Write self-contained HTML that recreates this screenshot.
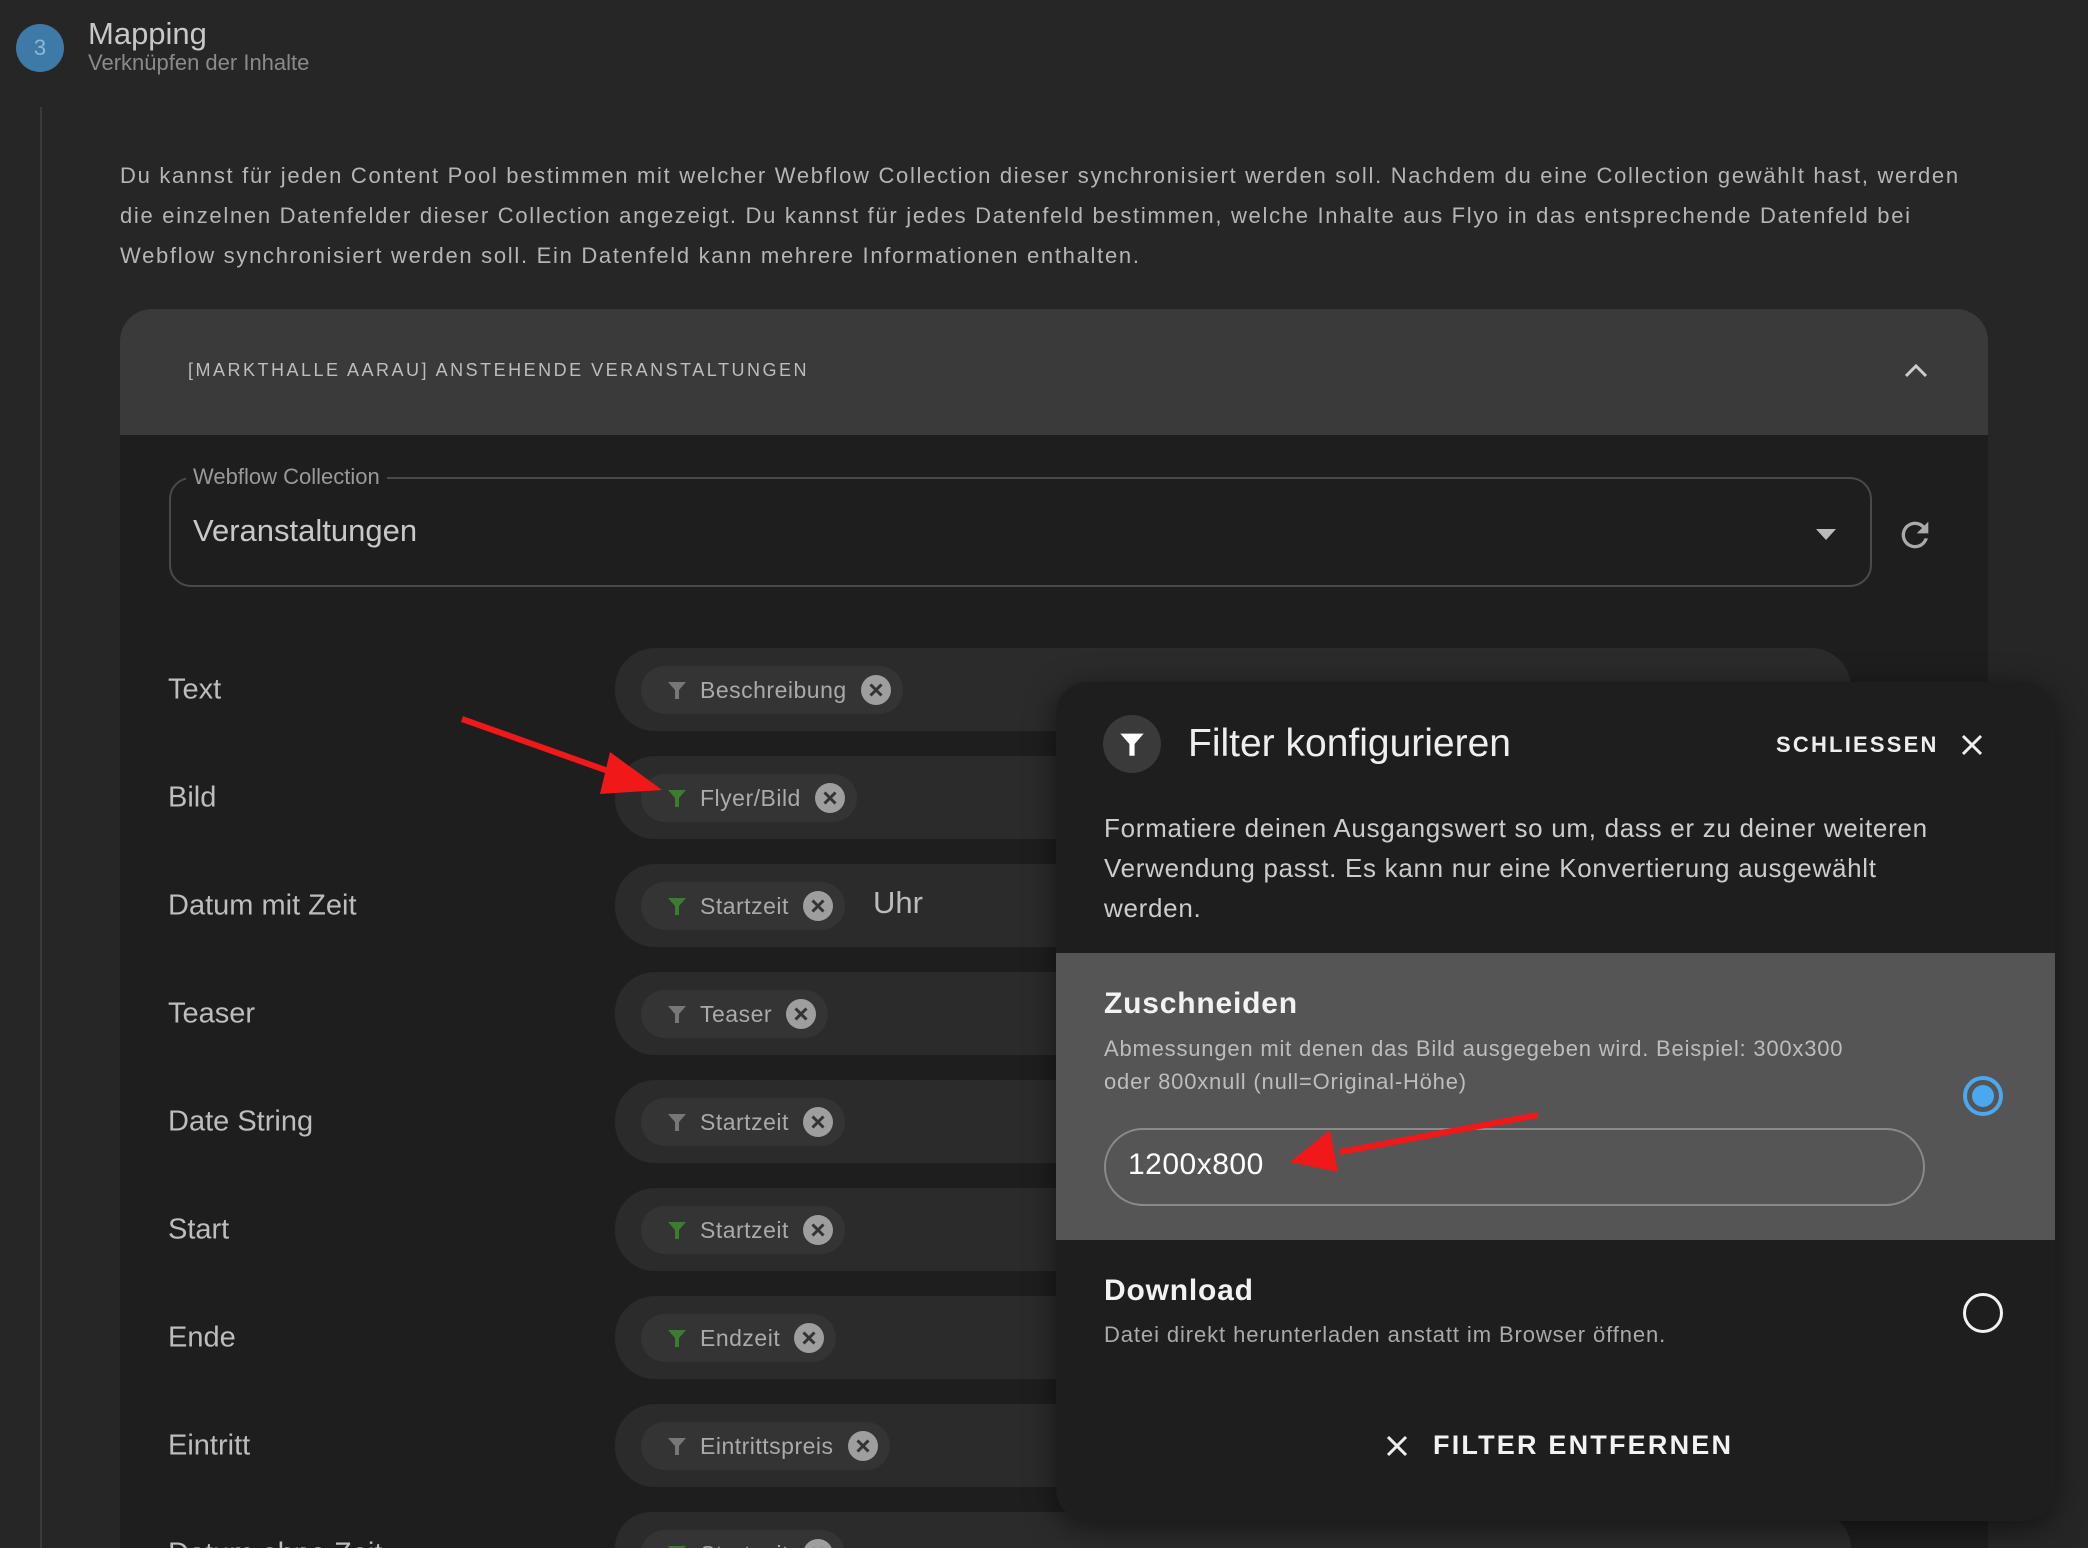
<!DOCTYPE html>
<html style="width:2088px;height:1548px;overflow:hidden"><head><meta charset="utf-8"><style>
*{box-sizing:border-box;margin:0;padding:0}
body{width:2088px;height:1548px;overflow:hidden;background:#262626;font-family:"Liberation Sans",sans-serif;position:relative;color:#ccc}
.abs{position:absolute}
.row{position:absolute;left:615px;width:1236px;height:83px;border-radius:40px;background:#2b2b2b}
.lbl{position:absolute;left:168px;font-size:29px;color:#bdbdbd;transform:translateY(-50%)}
.chip{position:absolute;left:26px;top:18px;height:48px;border-radius:24px;background:#343434;display:flex;align-items:center;padding:0 12px 0 26px;font-size:23px;color:#aaa;white-space:nowrap;letter-spacing:0.5px}
.chip svg.f{width:20px;height:20px;margin-right:13px}
.chip svg.x{width:30px;height:30px;margin-left:14px}
</style></head><body>
<svg width="0" height="0" style="position:absolute"><defs>
<symbol id="fun" viewBox="0 0 20 20"><path d="M1 2h18l-7 8v9h-4v-9z"/></symbol>
<symbol id="xc" viewBox="0 0 30 30"><circle cx="15" cy="15" r="15" fill="#9e9e9e"/><path d="M9.5 9.5l11 11M20.5 9.5l-11 11" stroke="#333" stroke-width="3"/></symbol>
</defs></svg>

<div class="abs" style="left:40px;top:107px;width:2px;height:1441px;background:#3a3a3a"></div>
<div class="abs" style="left:16px;top:24px;width:48px;height:48px;border-radius:50%;background:#3d7aa8;color:#8fb8d6;font-size:22px;text-align:center;line-height:48px">3</div>
<div class="abs" style="left:88px;top:16px;font-size:31px;color:#c8c8c8">Mapping</div>
<div class="abs" style="left:88px;top:50px;font-size:22px;color:#8a8a8a">Verknüpfen der Inhalte</div>

<div class="abs" style="left:120px;top:156px;width:1862px;font-size:22px;line-height:40px;color:#b5b5b5;letter-spacing:1.7px">Du kannst für jeden Content Pool bestimmen mit welcher Webflow Collection dieser synchronisiert werden soll. Nachdem du eine Collection gewählt hast, werden die einzelnen Datenfelder dieser Collection angezeigt. Du kannst für jedes Datenfeld bestimmen, welche Inhalte aus Flyo in das entsprechende Datenfeld bei Webflow synchronisiert werden soll. Ein Datenfeld kann mehrere Informationen enthalten.</div>

<div class="abs" style="left:120px;top:309px;width:1868px;height:1239px;background:#1e1e1e;border-radius:32px 32px 0 0;overflow:hidden">
 <div style="height:126px;background:#3a3a3a;position:relative">
  <div class="abs" style="left:68px;top:51px;font-size:18px;letter-spacing:2.5px;color:#bdbdbd">[MARKTHALLE AARAU] ANSTEHENDE VERANSTALTUNGEN</div>
  <svg class="abs" style="left:1783px;top:52px" width="26" height="18" viewBox="0 0 26 18"><path d="M3 15l10-10 10 10" fill="none" stroke="#ccc" stroke-width="3"/></svg>
 </div>
</div>

<div class="abs" style="left:169px;top:477px;width:1703px;height:110px;border:2px solid #4a4a4a;border-radius:22px"></div>
<div class="abs" style="left:186px;top:464px;padding:0 7px;background:#1e1e1e;font-size:22px;color:#999">Webflow Collection</div>
<div class="abs" style="left:193px;top:513px;font-size:31px;color:#c8c8c8">Veranstaltungen</div>
<svg class="abs" style="left:1816px;top:529px" width="20" height="12"><path d="M0 0h20L10 11z" fill="#bbb"/></svg>
<svg class="abs" style="left:1895px;top:515px" width="40" height="40" viewBox="0 0 24 24"><path d="M17.65 6.35A7.96 7.96 0 0 0 12 4a8 8 0 1 0 7.74 10h-2.08A6 6 0 1 1 12 6c1.66 0 3.14.69 4.22 1.78L13 11h7V4z" fill="#aaa"/></svg>

<div class="lbl" style="top:690px">Text</div>
<div class="lbl" style="top:798px">Bild</div>
<div class="lbl" style="top:906px">Datum mit Zeit</div>
<div class="lbl" style="top:1014px">Teaser</div>
<div class="lbl" style="top:1122px">Date String</div>
<div class="lbl" style="top:1230px">Start</div>
<div class="lbl" style="top:1338px">Ende</div>
<div class="lbl" style="top:1446px">Eintritt</div>
<div class="lbl" style="top:1554px">Datum ohne Zeit</div>

<div class="row" style="top:648px"><div class="chip"><svg class="f" fill="#777"><use href="#fun"/></svg>Beschreibung<svg class="x"><use href="#xc"/></svg></div></div>
<div class="row" style="top:756px"><div class="chip"><svg class="f" fill="#3f7a33"><use href="#fun"/></svg>Flyer/Bild<svg class="x"><use href="#xc"/></svg></div></div>
<div class="row" style="top:864px"><div class="chip"><svg class="f" fill="#3f7a33"><use href="#fun"/></svg>Startzeit<svg class="x"><use href="#xc"/></svg></div><div class="abs" style="left:258px;top:21px;font-size:31px;color:#bbb">Uhr</div></div>
<div class="row" style="top:972px"><div class="chip"><svg class="f" fill="#777"><use href="#fun"/></svg>Teaser<svg class="x"><use href="#xc"/></svg></div></div>
<div class="row" style="top:1080px"><div class="chip"><svg class="f" fill="#777"><use href="#fun"/></svg>Startzeit<svg class="x"><use href="#xc"/></svg></div></div>
<div class="row" style="top:1188px"><div class="chip"><svg class="f" fill="#3f7a33"><use href="#fun"/></svg>Startzeit<svg class="x"><use href="#xc"/></svg></div></div>
<div class="row" style="top:1296px"><div class="chip"><svg class="f" fill="#3f7a33"><use href="#fun"/></svg>Endzeit<svg class="x"><use href="#xc"/></svg></div></div>
<div class="row" style="top:1404px"><div class="chip"><svg class="f" fill="#777"><use href="#fun"/></svg>Eintrittspreis<svg class="x"><use href="#xc"/></svg></div></div>
<div class="row" style="top:1512px;height:36px;border-radius:40px 40px 0 0;overflow:hidden"><div class="chip"><svg class="f" fill="#3f7a33"><use href="#fun"/></svg>Startzeit<svg class="x"><use href="#xc"/></svg></div></div>

<svg class="abs" style="left:0;top:0" width="2088" height="1548"><path d="M462 719L625 777" stroke="#f01818" stroke-width="6"/><path d="M662 790L610 752L600 794z" fill="#f01818"/>
</svg>

<div class="abs" style="left:1056px;top:682px;width:999px;height:839px;background:#1e1e1e;border-radius:32px;overflow:hidden;box-shadow:0 6px 30px rgba(0,0,0,.5)">
 <div class="abs" style="left:47px;top:33px;width:58px;height:58px;border-radius:50%;background:#3a3a3a"></div>
 <svg class="abs" style="left:63px;top:49px" width="26" height="26" viewBox="0 0 20 20" fill="#fff"><path d="M1 2h18l-7 8v9h-4v-9z"/></svg>
 <div class="abs" style="left:132px;top:40px;font-size:39px;color:#eee">Filter konfigurieren</div>
 <div class="abs" style="left:720px;top:50px;font-size:22px;font-weight:bold;letter-spacing:2.2px;color:#eee">SCHLIESSEN</div>
 <svg class="abs" style="left:905px;top:52px" width="22" height="22"><path d="M2 2l18 18M20 2L2 20" stroke="#eee" stroke-width="3"/></svg>
 <div class="abs" style="left:48px;top:126px;width:865px;font-size:26px;line-height:40px;color:#ccc;letter-spacing:0.7px">Formatiere deinen Ausgangswert so um, dass er zu deiner weiteren Verwendung passt. Es kann nur eine Konvertierung ausgewählt werden.</div>
 <div class="abs" style="left:0;top:271px;width:999px;height:287px;background:#555"></div>
 <div class="abs" style="left:48px;top:305px;font-size:30px;font-weight:bold;color:#f2f2f2;letter-spacing:0.8px">Zuschneiden</div>
 <div class="abs" style="left:48px;top:350px;width:780px;font-size:22px;line-height:33px;color:#bdbdbd;letter-spacing:0.8px">Abmessungen mit denen das Bild ausgegeben wird. Beispiel: 300x300 oder 800xnull (null=Original-Höhe)</div>
 <div class="abs" style="left:48px;top:446px;width:821px;height:78px;border:2px solid #8a8a8a;border-radius:40px"></div>
 <div class="abs" style="left:72px;top:466px;font-size:30px;color:#fff;letter-spacing:0.5px">1200x800</div>
 <div class="abs" style="left:907px;top:394px;width:40px;height:40px;border-radius:50%;border:4px solid #4aa8f0"></div>
 <div class="abs" style="left:916px;top:403px;width:22px;height:22px;border-radius:50%;background:#4aa8f0"></div>
 <div class="abs" style="left:48px;top:592px;font-size:30px;font-weight:bold;color:#f2f2f2;letter-spacing:0.8px">Download</div>
 <div class="abs" style="left:48px;top:640px;font-size:22px;color:#aaa;letter-spacing:0.9px">Datei direkt herunterladen anstatt im Browser öffnen.</div>
 <div class="abs" style="left:907px;top:611px;width:40px;height:40px;border-radius:50%;border:3px solid #f2f2f2"></div>
 <svg class="abs" style="left:330px;top:753px" width="22" height="22"><path d="M2 2l18 18M20 2L2 20" stroke="#eee" stroke-width="3"/></svg>
 <div class="abs" style="left:377px;top:748px;font-size:27px;font-weight:bold;letter-spacing:2.2px;color:#f2f2f2">FILTER ENTFERNEN</div>
</div>

<svg class="abs" style="left:0;top:0" width="2088" height="1548"><path d="M1538 1115L1340 1152" stroke="#f01818" stroke-width="6"/><path d="M1290 1162L1330 1130L1338 1172z" fill="#f01818"/></svg>
</body></html>
